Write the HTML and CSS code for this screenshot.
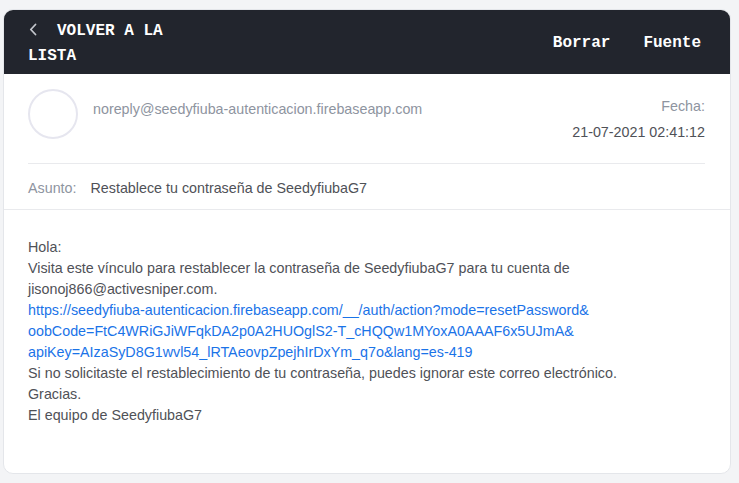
FILE: index.html
```html
<!DOCTYPE html>
<html lang="es">
<head>
<meta charset="utf-8">
<title>Correo</title>
<link rel="stylesheet" href="styles.css">
</head>
<body>
<div class="page">
  <div class="card">
    <header class="topbar">
      <a class="back" href="#">
        <svg class="chev" width="8" height="13" viewBox="0 0 8 13"><polyline points="6.5,1.5 1.8,6.5 6.5,11.5" fill="none" stroke="#c3c6cc" stroke-width="1.8" stroke-linecap="round" stroke-linejoin="round"/></svg>VOLVER A LA LISTA
      </a>
      <nav class="actions">
        <a href="#">Borrar</a>
        <a href="#">Fuente</a>
      </nav>
    </header>
    <section class="meta">
      <div class="sender-row">
        <div class="avatar"></div>
        <div class="from">noreply@seedyfiuba-autenticacion.firebaseapp.com</div>
        <div class="when">
          <div class="when-label">Fecha:</div>
          <div class="when-value">21-07-2021 02:41:12</div>
        </div>
      </div>
      <div class="subject-row">
        <span class="subject-label">Asunto:</span>
        <span class="subject">Restablece tu contraseña de SeedyfiubaG7</span>
      </div>
    </section>
    <section class="message">
      <p>Hola:<br>
      Visita este vínculo para restablecer la contraseña de SeedyfiubaG7 para tu cuenta de jisonoj866@activesniper.com.<br>
      <a href="#">https://seedyfiuba-autenticacion.firebaseapp.com/__/auth/action?mode=resetPassword&amp;<br>oobCode=FtC4WRiGJiWFqkDA2p0A2HUOglS2-T_cHQQw1MYoxA0AAAF6x5UJmA&amp;<br>apiKey=AIzaSyD8G1wvl54_lRTAeovpZpejhIrDxYm_q7o&amp;lang=es-419</a><br>
      Si no solicitaste el restablecimiento de tu contraseña, puedes ignorar este correo electrónico.<br>
      Gracias.<br>
      El equipo de SeedyfiubaG7</p>
    </section>
  </div>
</div>
</body>
</html>
```
FILE: styles.css
```css
* { box-sizing: border-box; }
html, body { margin: 0; padding: 0; }
body {
  background: #f3f4f6;
  font-family: "Liberation Sans", Arial, sans-serif;
  font-size: 14.3px;
}
.page {
  padding: 9px 8px 9px 3px;
}
.card {
  background: #fff;
  border: 1px solid #e4e6ea;
  border-radius: 10px;
  overflow: hidden;
  height: 465px;
  display: flex;
  flex-direction: column;
}
.topbar {
  background: #22252d;
  height: 64px;
  display: flex;
  align-items: center;
  justify-content: space-between;
  padding: 0 29px 0 24px;
  font-family: "Liberation Mono", "Courier New", monospace;
  font-weight: bold;
  font-size: 16px;
  color: #fff;
}
.back {
  color: #fff;
  text-decoration: none;
  width: 160px;
  line-height: 25px;
  margin-top: 3px;
}
.chev {
  display: inline-block;
  vertical-align: -1px;
  margin: 0 20px 0 1px;
}
.actions {
  display: flex;
  gap: 33px;
  line-height: 20px;
  margin-top: 1px;
}
.actions a {
  color: #fff;
  text-decoration: none;
}
.meta {
  padding: 0 25px 0 24px;
  border-bottom: 1px solid #e9eaed;
}
.sender-row {
  display: flex;
  align-items: flex-start;
  padding: 15px 0 23px;
  border-bottom: 1px solid #e9eaed;
}
.avatar {
  width: 50px;
  height: 50px;
  border-radius: 50%;
  border: 2px solid #e6e6ef;
  flex: none;
}
.from {
  margin: 12px 0 0 15px;
  line-height: 16px;
  color: #8e94a0;
  flex: 1;
}
.when {
  text-align: right;
  line-height: 16px;
  margin-top: 9px;
}
.when-label {
  color: #8e94a0;
}
.when-value {
  color: #4f5157;
  margin-top: 10px;
}
.subject-row {
  padding: 16px 0 13px;
  line-height: 16px;
  display: flex;
  gap: 14px;
}
.subject-label {
  color: #8e94a0;
}
.subject {
  color: #4f5157;
}
.message {
  padding: 27px 25px 0 24px;
  color: #4f5157;
  line-height: 21px;
}
.message p {
  margin: 0;
}
.message a {
  color: #1a73e8;
  text-decoration: none;
}
```
